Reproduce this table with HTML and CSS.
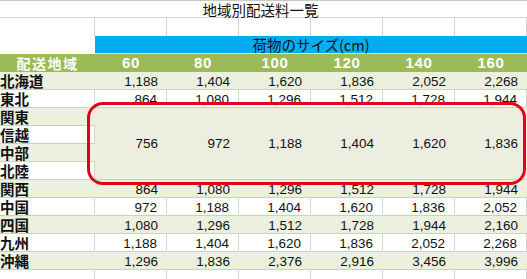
FILE: index.html
```html
<!DOCTYPE html>
<html lang="ja">
<head>
<meta charset="utf-8">
<title>地域別配送料一覧</title>
<link rel="stylesheet" href="styles.css">
</head>
<body>
<div class="sheet">
  <div class="title">地域別配送料一覧</div>

  <div class="tr blank"><div></div><div></div><div></div><div></div><div></div><div></div><div></div></div>

  <div class="tr size"><div class="empty"></div><div class="blue">荷物のサイズ(cm)</div></div>

  <div class="tr head">
    <div class="hname">配送地域</div><div>60</div><div>80</div><div>100</div><div>120</div><div>140</div><div>160</div>
  </div>

  <div class="tr shade"><div class="name">北海道</div><div class="num">1,188</div><div class="num">1,404</div><div class="num">1,620</div><div class="num">1,836</div><div class="num">2,052</div><div class="num">2,268</div></div>
  <div class="tr plain"><div class="name">東北</div><div class="num">864</div><div class="num">1,080</div><div class="num">1,296</div><div class="num">1,512</div><div class="num">1,728</div><div class="num">1,944</div></div>

  <div class="tr shade"><div class="name">関東</div>
    <div class="merged">
      <div class="num">756</div><div class="num">972</div><div class="num">1,188</div><div class="num">1,404</div><div class="num">1,620</div><div class="num">1,836</div>
    </div>
  </div>
  <div class="tr plain"><div class="name">信越</div></div>
  <div class="tr shade"><div class="name">中部</div></div>
  <div class="tr plain"><div class="name">北陸</div></div>

  <div class="tr shade"><div class="name">関西</div><div class="num">864</div><div class="num">1,080</div><div class="num">1,296</div><div class="num">1,512</div><div class="num">1,728</div><div class="num">1,944</div></div>
  <div class="tr plain"><div class="name">中国</div><div class="num">972</div><div class="num">1,188</div><div class="num">1,404</div><div class="num">1,620</div><div class="num">1,836</div><div class="num">2,052</div></div>
  <div class="tr shade"><div class="name">四国</div><div class="num">1,080</div><div class="num">1,296</div><div class="num">1,512</div><div class="num">1,728</div><div class="num">1,944</div><div class="num">2,160</div></div>
  <div class="tr plain"><div class="name">九州</div><div class="num">1,188</div><div class="num">1,404</div><div class="num">1,620</div><div class="num">1,836</div><div class="num">2,052</div><div class="num">2,268</div></div>
  <div class="tr shade"><div class="name">沖縄</div><div class="num">1,296</div><div class="num">1,836</div><div class="num">2,376</div><div class="num">2,916</div><div class="num">3,456</div><div class="num">3,996</div></div>

  <div class="tr blank last"><div></div><div></div><div></div><div></div><div></div><div></div><div></div></div>

  <div class="highlight"></div>
</div>
</body>
</html>
```
FILE: styles.css
```css
html, body {
  margin: 0;
  padding: 0;
  background: #ffffff;
}

.sheet {
  position: relative;
  display: grid;
  grid-template-columns: 95px repeat(6, 72px);
  grid-auto-rows: 18px;
  width: 527px;
  font-family: "Noto Sans CJK JP", "Liberation Sans", sans-serif;
  color: #111;
}

.sheet > .tr {
  display: contents;
}

.sheet .tr > div {
  box-sizing: border-box;
}

.title {
  grid-column: 1 / -1;
  box-sizing: border-box;
  border-top: 1px solid #c8c8c8;
  border-bottom: 1px solid #d4d4d4;
  text-align: center;
  font-size: 14.5px;
  line-height: 17px;
  padding-right: 6px;
}

.blank > div {
  border-right: 1px solid #d4d4d4;
}

.size .empty {
  background: #fff;
}

.size .blue {
  grid-column: 2 / -1;
  background: #00aeef;
  border-bottom: 1px solid #d8e6c4;
  text-align: center;
  font-size: 14.5px;
  line-height: 17px;
  color: #111;
}

.head > div {
  background: #9bbb59;
  color: #fff;
  font-family: "Liberation Sans", sans-serif;
  font-weight: bold;
  font-size: 15px;
  line-height: 18px;
  letter-spacing: 0.6px;
  text-align: center;
}

.head > .hname {
  font-family: "Noto Sans CJK JP", sans-serif;
  font-size: 14px;
  letter-spacing: 1.5px;
  line-height: 18px;
}

.shade > div {
  background: #ebf1de;
  border-bottom: 1px solid #c8d7a6;
}

.plain > div {
  background: #fff;
  border-bottom: 1px solid #c8d7a6;
  border-right: 1px solid #d4d4d4;
}

.name {
  font-weight: bold;
  font-size: 14.5px;
  line-height: 18px;
  white-space: nowrap;
}

.num {
  font-family: "Liberation Sans", sans-serif;
  font-size: 13.5px;
  line-height: 19px;
  text-align: right;
  padding-right: 9px;
}

.shade > .merged {
  grid-column: 2 / -1;
  grid-row: span 4;
  display: grid;
  grid-template-columns: repeat(6, 72px);
  align-items: center;
  background: #eceee0;
  border-bottom: 1px solid #c8d7a6;
}

.merged .num {
  line-height: 18px;
  padding-top: 1px;
}

.highlight {
  position: absolute;
  left: 87px;
  top: 102px;
  width: 439px;
  height: 83px;
  box-sizing: border-box;
  border: 3px solid #e2001a;
  border-radius: 16px;
}
```
